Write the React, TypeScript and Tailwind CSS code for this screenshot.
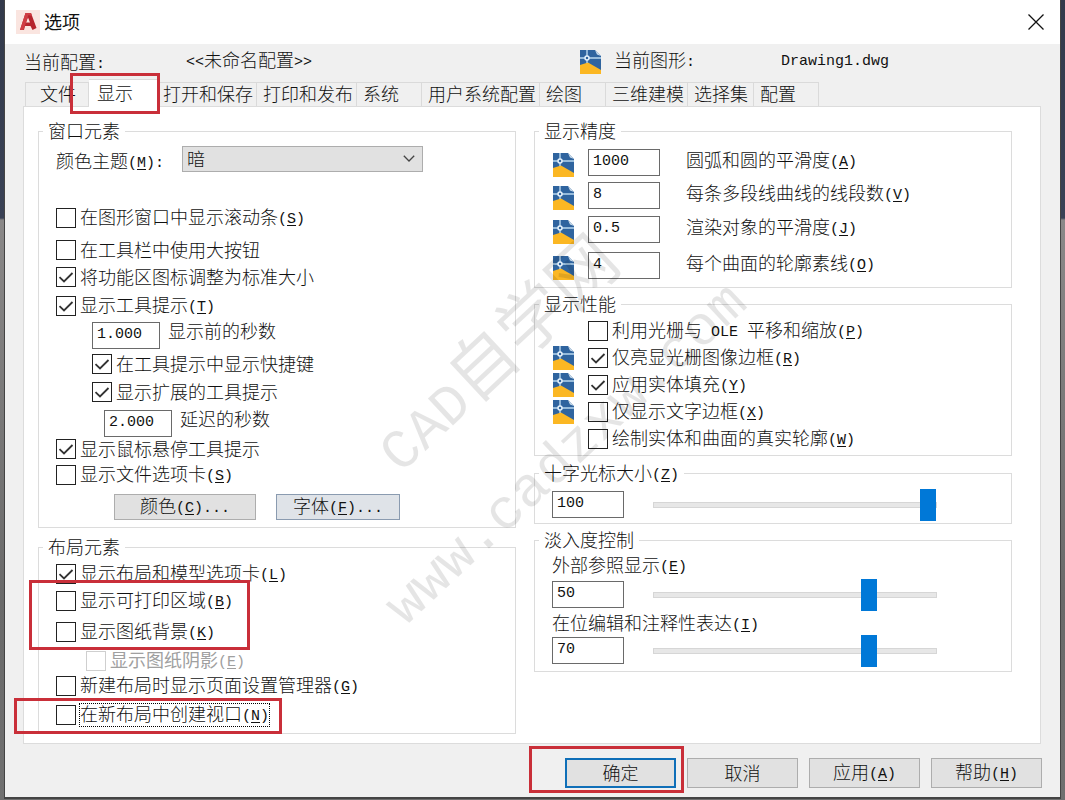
import type { ReactNode } from 'react';

interface CheckProps {
  label:     ReactNode;
  hotkey?:   string;
  checked?:  boolean;
  disabled?: boolean;
  focused?:  boolean;
  className?: string;
}

const TABS = [
  { name: '文件',         size: 'w-[64px] pl-3.5' },
  { name: '显示',         size: 'w-[68px] pl-2', active: true },
  { name: '打开和保存',   size: 'w-[100px] pl-1.5' },
  { name: '打印和发布',   size: 'w-[100px] pl-1.5' },
  { name: '系统',         size: 'w-[65px] pl-1.5' },
  { name: '用户系统配置', size: 'w-[118px] pl-1.5' },
  { name: '绘图',         size: 'w-[66px] pl-1.5' },
  { name: '三维建模',     size: 'w-[82px] pl-1.5' },
  { name: '选择集',       size: 'w-[66px] pl-1.5' },
  { name: '配置',         size: 'w-[65px] pl-1.5' },
];

const PRECISION = [
  { id: 'arc',      value: '1000', label: '圆弧和圆的平滑度',     hotkey: 'A', gap: 'mt-[9px]' },
  { id: 'segments', value: '8',    label: '每条多段线曲线的线段数', hotkey: 'V', gap: 'mt-1.5' },
  { id: 'render',   value: '0.5',  label: '渲染对象的平滑度',     hotkey: 'J', gap: 'mt-[7px]' },
  { id: 'contour',  value: '4',    label: '每个曲面的轮廓素线',   hotkey: 'O', gap: 'mt-[9px]' },
];

function Latin({ children }: { children: ReactNode }) {
  return (
    <span className="align-[1px] font-['Liberation_Mono',monospace] text-[15px] leading-none font-normal whitespace-pre">
      {children}
    </span>
  );
}

function Hotkey({ k, after = '' }: { k: string; after?: string }) {
  return (
    <Latin>
      (<u className="underline-offset-2">{k}</u>){after}
    </Latin>
  );
}

function Mark({ className }: { className: string }) {
  return <span className={`pointer-events-none absolute z-20 border-[3px] border-[#c92f39] ${className}`} />;
}

function DwgIcon({ className = '' }: { className?: string }) {
  return (
    <svg viewBox="0 0 22 24" className={`h-6 w-[22px] shrink-0 ${className}`} aria-hidden="true">
      <path d="M0 0H15L21 6V24H0Z" fill="#2f649f" />
      <path d="M0 15L8 12.5L21 20V24H0Z" fill="#fbb723" />
      <path d="M15 0L21 6L17 4.5Z" fill="#c9dbea" />
      <path d="M0 8H21M7 0V13" stroke="#b9d7ef" strokeWidth="1.4" />
      <circle cx="7" cy="8" r="2" fill="#2f649f" stroke="#e4f1fb" strokeWidth="1.5" />
    </svg>
  );
}

function Check({ label, hotkey, checked, disabled, focused, className = '' }: CheckProps) {
  return (
    <label className={`flex h-5 w-fit items-center gap-1 ${disabled ? 'font-normal text-[#a0a0a0]' : ''} ${className}`}>
      <span className="grid size-5 shrink-0">
        <input
          type="checkbox"
          defaultChecked={checked}
          disabled={disabled}
          className="peer col-start-1 row-start-1 size-5 appearance-none border border-[#222] disabled:border-[#cfcfcf]"
        />
        <svg
          viewBox="0 0 20 20"
          className="pointer-events-none invisible col-start-1 row-start-1 size-5 peer-checked:visible"
          fill="none"
          stroke="#333"
          strokeWidth="1.8"
        >
          <path d="M3.5 10.2L8 14.5L16.5 6" />
        </svg>
      </span>
      <span className={`pb-0.5 whitespace-nowrap ${focused ? 'outline outline-1 outline-dotted outline-black' : ''}`}>
        {label}
        {hotkey && <Hotkey k={hotkey} />}
      </span>
    </label>
  );
}

function Group({ title, className = '', body, children }: { title: ReactNode; className?: string; body: string; children: ReactNode }) {
  return (
    <fieldset className={`min-w-0 border border-[#dcdcdc] ${className}`}>
      <legend className="ml-1 h-[18px] px-[5px] leading-[16px]">{title}</legend>
      <div className={`flow-root ${body}`}>{children}</div>
    </fieldset>
  );
}

function Field({ id, value, className = 'w-[72px]' }: { id: string; value: string; className?: string }) {
  return (
    <input
      id={id}
      type="text"
      defaultValue={value}
      className={`h-[27px] shrink-0 border border-[#6a6a6a] pb-0.5 pl-1 font-['Liberation_Mono',monospace] text-[15px] font-normal ${className}`}
    />
  );
}

function Slider({ name, value, max }: { name: string; value: number; max: number }) {
  return (
    <input
      type="range"
      aria-label={name}
      min={0}
      max={max}
      defaultValue={value}
      className="mr-[74px] ml-[29px] h-8 min-w-0 flex-1 appearance-none bg-transparent [&::-webkit-slider-runnable-track]:h-1.5 [&::-webkit-slider-runnable-track]:border [&::-webkit-slider-runnable-track]:border-[#d6d6d6] [&::-webkit-slider-runnable-track]:bg-[#e7e7e7] [&::-webkit-slider-thumb]:-mt-3.5 [&::-webkit-slider-thumb]:h-8 [&::-webkit-slider-thumb]:w-4 [&::-webkit-slider-thumb]:appearance-none [&::-webkit-slider-thumb]:bg-[#0078d7]"
    />
  );
}

function PushButton({ children, className = 'border border-[#adadad]' }: { children: ReactNode; className?: string }) {
  return (
    <button type="button" className={`h-[30px] w-[111px] bg-[#e1e1e1] pb-0.5 ${className}`}>
      {children}
    </button>
  );
}

function WindowElements() {
  return (
    <Group title="窗口元素" body="pb-[7px] pl-[17px]">
      <div className="mt-1.5 flex h-[26px] items-center">
        <label htmlFor="theme" className="w-[126px] pt-1 whitespace-nowrap">
          颜色主题<Hotkey k="M" after=":" />
        </label>
        <div className="relative w-[241px]">
          <select id="theme" className="block h-[26px] w-full appearance-none border border-[#adadad] bg-[#e1e1e1] pb-0.5 pl-1">
            <option>暗</option>
            <option>明</option>
          </select>
          <svg viewBox="0 0 12 7" className="pointer-events-none absolute top-[9px] right-2 h-[7px] w-3" fill="none" stroke="#444" strokeWidth="1.3">
            <path d="M0.8 0.8L6 6L11.2 0.8" />
          </svg>
        </div>
      </div>

      <Check label="在图形窗口中显示滚动条" hotkey="S" className="mt-9" />
      <Check label="在工具栏中使用大按钮" className="mt-3" />
      <Check label="将功能区图标调整为标准大小" checked className="mt-[7px]" />
      <Check label="显示工具提示" hotkey="T" checked className="mt-[9px]" />
      <div className="mt-1.5 ml-9 flex gap-2">
        <Field id="delay" value="1.000" className="w-[68px]" />
        <label htmlFor="delay" className="leading-[16px]">显示前的秒数</label>
      </div>
      <Check label="在工具提示中显示快捷键" checked className="mt-[5px] ml-9" />
      <Check label="显示扩展的工具提示" checked className="mt-2 ml-9" />
      <div className="mt-2 ml-12 flex gap-2">
        <Field id="extended" value="2.000" className="w-[68px]" />
        <label htmlFor="extended" className="leading-[16px]">延迟的秒数</label>
      </div>
      <Check label="显示鼠标悬停工具提示" checked className="mt-0.5" />
      <Check label="显示文件选项卡" hotkey="S" className="mt-1.5" />

      <div className="mt-[9px] ml-[58px] flex gap-5">
        <button type="button" className="h-[26px] w-[142px] border border-[#adadad] bg-[#e1e1e1] pb-0.5">
          颜色<Hotkey k="C" after="..." />
        </button>
        <button type="button" className="h-[26px] w-[124px] border border-[#8a9bb0] bg-[#dfe3e8] pb-0.5">
          字体<Hotkey k="F" after="..." />
        </button>
      </div>
    </Group>
  );
}

function LayoutElements() {
  return (
    <Group title="布局元素" className="mt-2.5" body="pb-2 pl-[17px]">
      <Check label="显示布局和模型选项卡" hotkey="L" checked className="mt-2" />
      <div className="relative mt-[7px]">
        <Mark className="-top-[11px] -left-[27px] h-[70px] w-[221px]" />
        <Check label="显示可打印区域" hotkey="B" />
        <Check label="显示图纸背景" hotkey="K" className="mt-[11px]" />
      </div>
      <Check label="显示图纸阴影" hotkey="E" disabled className="mt-[9px] ml-[30px]" />
      <Check label="新建布局时显示页面设置管理器" hotkey="G" className="mt-[5px]" />
      <div className="relative mt-[9px]">
        <Mark className="-top-[7px] -left-[42px] h-9 w-[268px]" />
        <Check label="在新布局中创建视口" hotkey="N" focused />
      </div>
    </Group>
  );
}

function PerformanceRow({ icon, children }: { icon?: boolean; children: ReactNode }) {
  return (
    <div className="flex h-5 items-center gap-[13px]">
      {icon ? <DwgIcon /> : <span className="w-[22px]" />}
      {children}
    </div>
  );
}

export default function App() {
  return (
    <div className="min-h-screen bg-[linear-gradient(#333a4b_0,#3a4256_218px,#8a8888_220px,#6a6a6a_600px,#707070)] px-[5px] pb-0.5 font-['Noto_Sans_CJK_SC',sans-serif] text-[18px] leading-[18px] font-light text-[#111]">
      <main className="relative overflow-hidden border-b border-[#444] bg-[#f0f0f0] pb-[9px] shadow-[0_0_0_1px_#444]">
        {/* Title bar */}
        <header className="flex h-11 items-center bg-white pr-4 pl-[11px]">
          <svg viewBox="0 0 24 24" className="size-6" aria-hidden="true">
            <rect width="24" height="24" fill="#fae5e0" />
            <path d="M4 20L9.5 3H15L20.5 18L16.5 20L14.5 16H9L8 20Z" fill="#b5242c" />
            <path d="M10 12.5L12 7.5L14 12.5Z" fill="#fae5e0" />
            <path d="M9.5 3H15L16 6L12.5 5L7.5 20H4Z" fill="#cf3d43" />
          </svg>
          <h1 className="ml-1 pb-0.5 font-normal">选项</h1>
          <button type="button" aria-label="关闭" className="ml-auto">
            <svg viewBox="0 0 16 16" className="size-4" stroke="#111" strokeWidth="1.3">
              <path d="M0.5 0.5L15.5 15.5M15.5 0.5L0.5 15.5" />
            </svg>
          </button>
        </header>

        {/* Profile and drawing */}
        <div className="grid h-[35px] grid-cols-[162px_394px_34px_167px_1fr] items-center pl-[19px] whitespace-nowrap">
          <span>当前配置<Latin>:</Latin></span>
          <span className="pb-[3px]"><Latin>&lt;&lt;</Latin>未命名配置<Latin>&gt;&gt;</Latin></span>
          <DwgIcon />
          <span className="pb-[3px]">当前图形<Latin>:</Latin></span>
          <Latin>Drawing1.dwg</Latin>
        </div>

        {/* Tabs */}
        <div role="tablist" className="flex h-[27px] items-end pl-5">
          {TABS.map(t => (
            <button
              key={t.name}
              type="button"
              role="tab"
              aria-selected={!!t.active}
              className={`relative shrink-0 border-t border-r border-[#dadada] text-left leading-[20px] whitespace-nowrap first:border-l ${t.size} ${
                t.active ? 'z-10 -mb-px h-7 border-r-0 bg-white pb-1' : 'h-6 pb-[3px]'
              }`}
            >
              {t.name}
              {t.active && <Mark className="-top-[7px] -left-[19px] h-[41px] w-[90px]" />}
            </button>
          ))}
        </div>

        {/* Display tab */}
        <section className="mr-[19px] ml-[18px] grid grid-cols-2 items-start gap-x-[18px] border border-[#dcdcdc] bg-white pt-[15px] pr-7 pb-[9px] pl-3.5">
          <div>
            <WindowElements />
            <LayoutElements />
          </div>

          <div>
            <Group title="显示精度" body="pb-2 pl-[18px]">
              {PRECISION.map(p => (
                <div key={p.id} className={`flex ${p.gap}`}>
                  <DwgIcon className="mt-1 -mb-1" />
                  <Field id={p.id} value={p.value} className="ml-[13px] w-[72px]" />
                  <label htmlFor={p.id} className="ml-[26px] leading-[21px] whitespace-nowrap">
                    {p.label}<Hotkey k={p.hotkey} />
                  </label>
                </div>
              ))}
            </Group>

            <Group title="显示性能" className="mt-[7px]" body="pb-1.5 pl-[18px]">
              <div className="mt-2 space-y-[7px]">
                <PerformanceRow>
                  <Check label={<>利用光栅与<Latin> OLE </Latin>平移和缩放</>} hotkey="P" />
                </PerformanceRow>
                <PerformanceRow icon><Check label="仅亮显光栅图像边框" hotkey="R" checked /></PerformanceRow>
                <PerformanceRow icon><Check label="应用实体填充" hotkey="Y" checked /></PerformanceRow>
                <PerformanceRow icon><Check label="仅显示文字边框" hotkey="X" /></PerformanceRow>
                <PerformanceRow><Check label="绘制实体和曲面的真实轮廓" hotkey="W" /></PerformanceRow>
              </div>
            </Group>

            <Group title={<label htmlFor="cursor">十字光标大小<Hotkey k="Z" /></label>} className="mt-2" body="pb-[5px] pl-[17px]">
              <div className="mt-[9px] flex h-[27px] items-center">
                <Field id="cursor" value="100" />
                <Slider name="十字光标大小" value={100} max={100} />
              </div>
            </Group>

            <Group title="淡入度控制" className="mt-[7px]" body="pb-[7px] pl-[17px]">
              <label htmlFor="xref" className="mt-[7px] block h-[18px] leading-[16px]">外部参照显示<Hotkey k="E" /></label>
              <div className="mt-[7px] flex h-[27px] items-center">
                <Field id="xref" value="50" />
                <Slider name="外部参照显示" value={70} max={90} />
              </div>
              <label htmlFor="inplace" className="mt-1.5 block h-[18px] leading-[16px]">在位编辑和注释性表达<Hotkey k="I" /></label>
              <div className="mt-[5px] flex h-[27px] items-center">
                <Field id="inplace" value="70" />
                <Slider name="在位编辑和注释性表达" value={70} max={90} />
              </div>
            </Group>
          </div>
        </section>

        {/* Buttons */}
        <footer className="mt-3.5 flex justify-end gap-[11px] pr-[18px]">
          <div className="relative">
            <PushButton className="border-2 border-[#0f6fb8]">确定</PushButton>
            <Mark className="-top-3 -left-9 h-[47px] w-[155px]" />
          </div>
          <PushButton>取消</PushButton>
          <PushButton>应用<Hotkey k="A" /></PushButton>
          <PushButton>帮助<Hotkey k="H" /></PushButton>
        </footer>

        {/* Watermark */}
        <div aria-hidden="true" className="pointer-events-none absolute inset-0 font-['Liberation_Mono',monospace] text-[56px] leading-none font-normal whitespace-nowrap text-black/10">
          <p className="absolute top-[352px] left-[490px] -translate-x-1/2 -translate-y-1/2 -rotate-[43deg]">
            CAD<span className="font-['Noto_Sans_CJK_SC',sans-serif] text-[68px]">自学网</span>
          </p>
          <p className="absolute top-[455px] left-[562px] -translate-x-1/2 -translate-y-1/2 -rotate-[43deg]">
            www.cadzxw.com
          </p>
        </div>
      </main>
    </div>
  );
}
